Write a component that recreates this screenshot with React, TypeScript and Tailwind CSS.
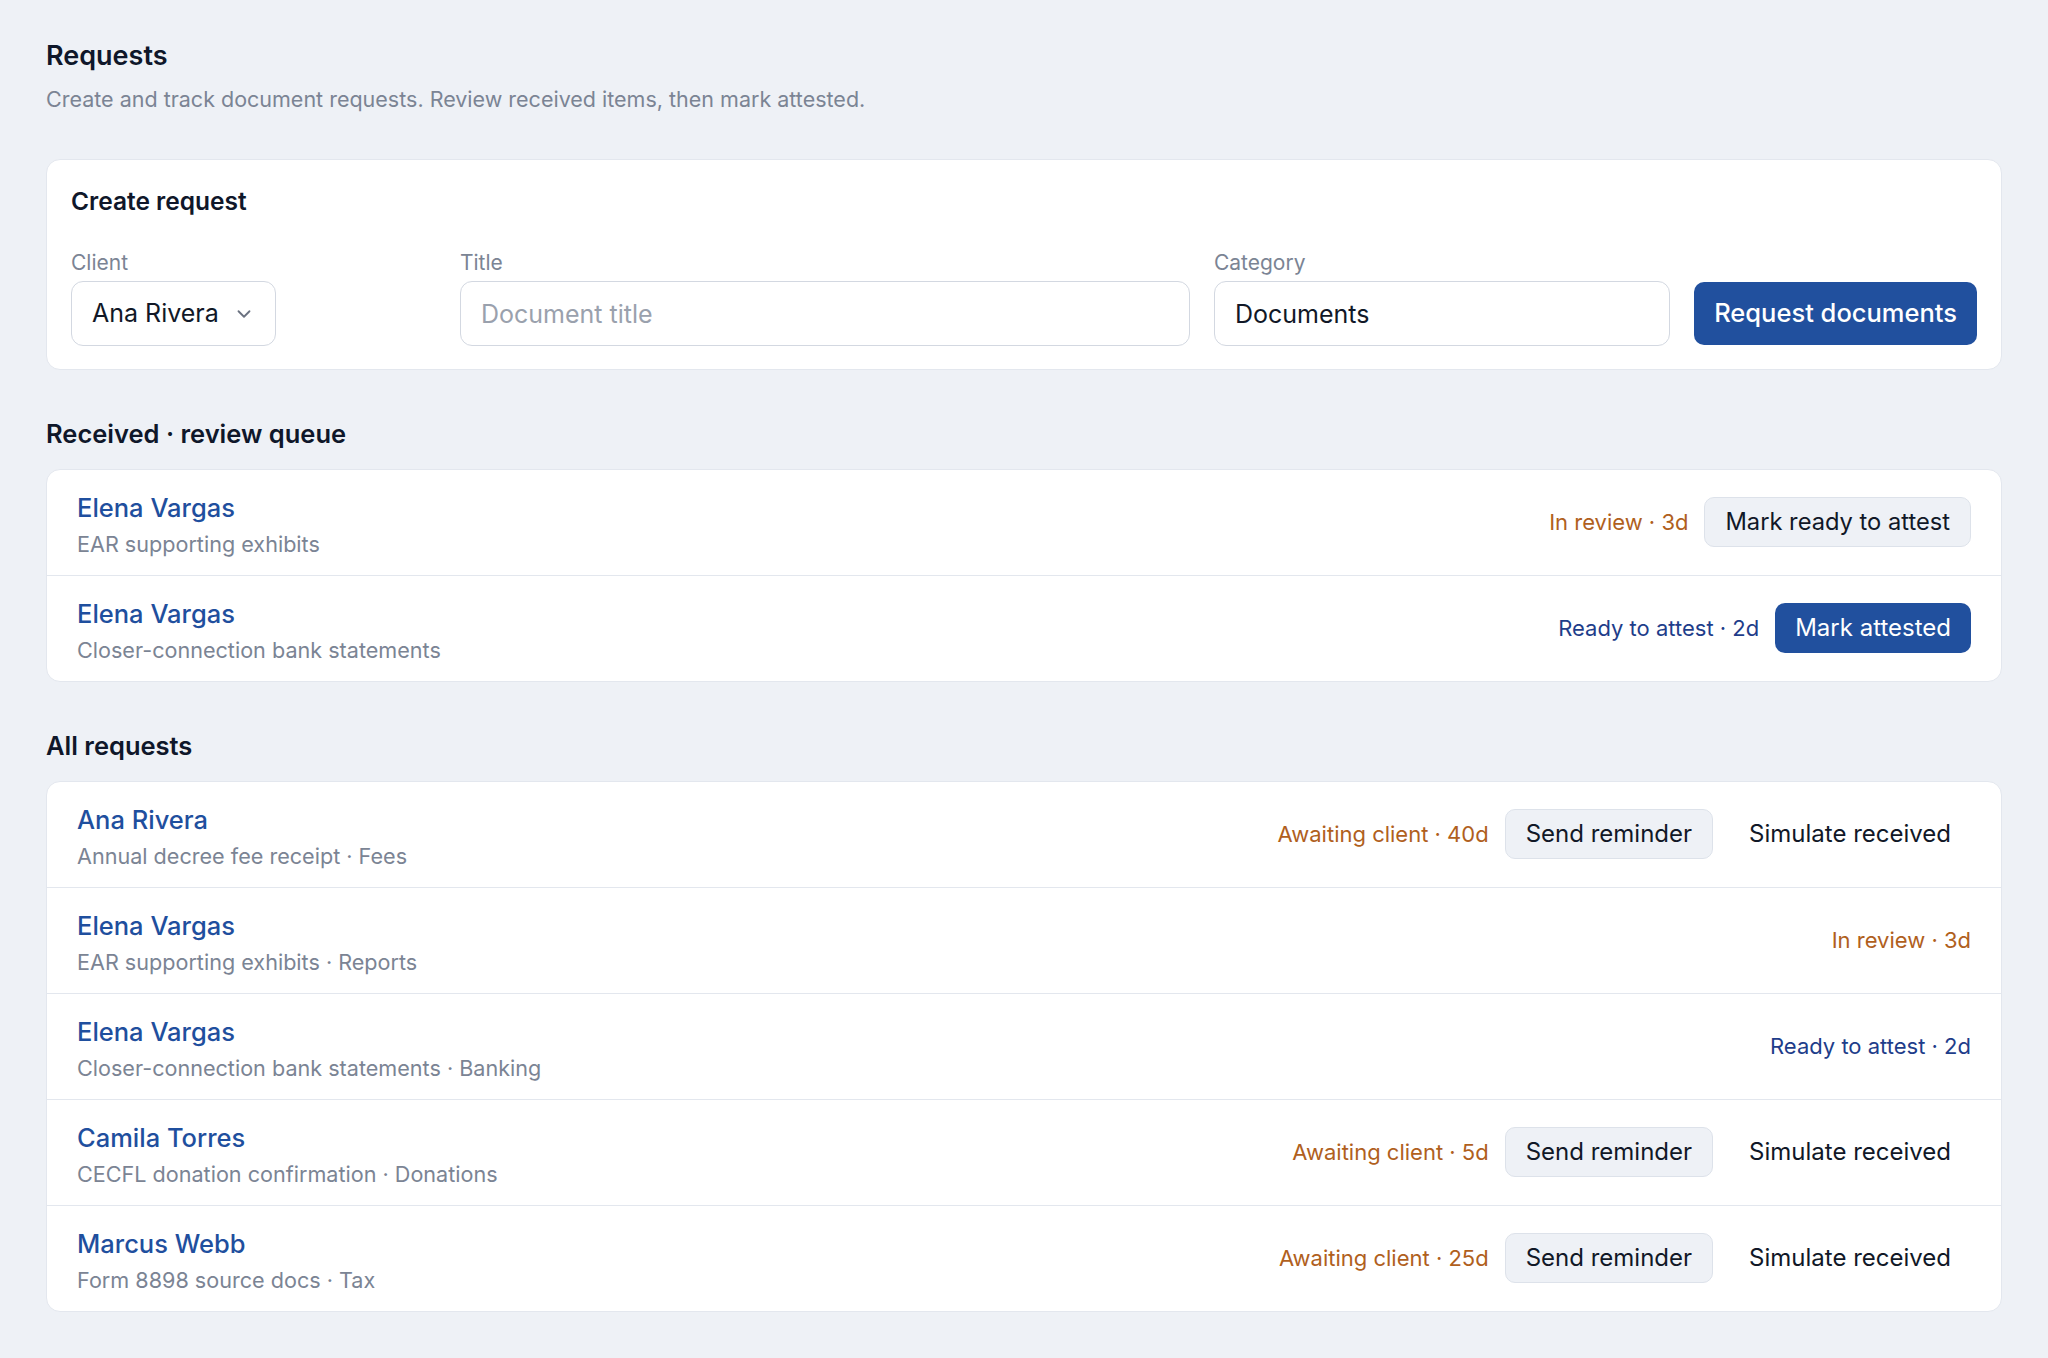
import { ChevronDown } from "lucide-react";

type Tone = "amber" | "navy";
type Action = "ready" | "attest" | "remind" | "simulate";

interface RequestRow {
  name: string;
  detail: string;
  status: string;
  tone: Tone;
  actions: Action[];
}

const reviewQueue: RequestRow[] = [
  {
    name: "Elena Vargas",
    detail: "EAR supporting exhibits",
    status: "In review · 3d",
    tone: "amber",
    actions: ["ready"],
  },
  {
    name: "Elena Vargas",
    detail: "Closer-connection bank statements",
    status: "Ready to attest · 2d",
    tone: "navy",
    actions: ["attest"],
  },
];

const allRequests: RequestRow[] = [
  {
    name: "Ana Rivera",
    detail: "Annual decree fee receipt · Fees",
    status: "Awaiting client · 40d",
    tone: "amber",
    actions: ["remind", "simulate"],
  },
  {
    name: "Elena Vargas",
    detail: "EAR supporting exhibits · Reports",
    status: "In review · 3d",
    tone: "amber",
    actions: [],
  },
  {
    name: "Elena Vargas",
    detail: "Closer-connection bank statements · Banking",
    status: "Ready to attest · 2d",
    tone: "navy",
    actions: [],
  },
  {
    name: "Camila Torres",
    detail: "CECFL donation confirmation · Donations",
    status: "Awaiting client · 5d",
    tone: "amber",
    actions: ["remind", "simulate"],
  },
  {
    name: "Marcus Webb",
    detail: "Form 8898 source docs · Tax",
    status: "Awaiting client · 25d",
    tone: "amber",
    actions: ["remind", "simulate"],
  },
];

function ActionButton({ kind }: { kind: Action }) {
  if (kind === "attest") {
    return (
      <button className="h-[50px] rounded-[10px] bg-[#21509e] px-[20px] text-[24px] leading-[30px] text-white">
        Mark attested
      </button>
    );
  }
  if (kind === "ready") {
    return (
      <button className="h-[50px] rounded-[10px] border border-[#dde2ea] bg-[#eef1f6] px-[20px] text-[23.7px] leading-[30px] text-[#111827]">
        Mark ready to attest
      </button>
    );
  }
  if (kind === "remind") {
    return (
      <button className="h-[50px] rounded-[10px] border border-[#dde2ea] bg-[#eef1f6] px-[20px] text-[24px] leading-[30px] text-[#111827]">
        Send reminder
      </button>
    );
  }
  return (
    <button className="h-[50px] rounded-[10px] px-[20px] text-[24px] leading-[30px] text-[#111827]">
      Simulate received
    </button>
  );
}

function Row({ row }: { row: RequestRow }) {
  return (
    <li className="flex items-center justify-between gap-6 px-[30px] pb-[17px] pt-[15px]">
      <div className="pt-[6px]">
        <div className="text-[25.5px] font-medium leading-[34px] text-[#1f4f9e]">{row.name}</div>
        <div className="mt-[5px] text-[21.6px] leading-[28px] text-[#7b8494]">{row.detail}</div>
      </div>
      <div className="flex items-center gap-[16px]">
        <span
          className={
            row.tone === "amber"
              ? "text-[22px] leading-[30px] text-[#b0601d]"
              : "text-[22px] leading-[30px] text-[#1e3d8a]"
          }
        >
          {row.status}
        </span>
        {row.actions.map((a) => (
          <ActionButton key={a} kind={a} />
        ))}
      </div>
    </li>
  );
}

function Section({ title, rows }: { title: string; rows: RequestRow[] }) {
  return (
    <section className="mt-[48px]">
      <h2 className="mb-[19px] text-[25.5px] font-semibold leading-[32px] text-[#0f172a]">{title}</h2>
      <ul className="divide-y divide-[#e3e7ee] overflow-hidden rounded-[14px] border border-[#e3e7ee] bg-white">
        {rows.map((r, i) => (
          <Row key={i} row={r} />
        ))}
      </ul>
    </section>
  );
}

function CreateRequest() {
  return (
    <section className="mt-[46px] rounded-[14px] border border-[#e3e7ee] bg-white px-[24px] pb-[23px] pt-[25px]">
      <h2 className="text-[24.5px] font-semibold leading-[32px] text-[#0f172a]">Create request</h2>
      <div className="mt-[32px] grid grid-cols-[1fr_2fr_1.25fr_auto] items-end gap-x-[24px]">
        <label className="flex flex-col items-start">
          <span className="mb-[4px] text-[21px] leading-[28px] text-[#7b8494]">Client</span>
          <button className="flex h-[65px] items-center gap-[14px] rounded-[12px] border border-[#d3d8e1] bg-white pl-[20px] pr-[20px] text-[25px] text-[#111827]">
            <span>Ana Rivera</span>
            <ChevronDown size={22} strokeWidth={2} className="text-[#6b7280]" />
          </button>
        </label>
        <label className="flex flex-col">
          <span className="mb-[4px] text-[21px] leading-[28px] text-[#7b8494]">Title</span>
          <input
            placeholder="Document title"
            className="h-[65px] w-full rounded-[12px] border border-[#d3d8e1] bg-white px-[20px] text-[25px] text-[#111827] outline-none placeholder:text-[#9aa1ad]"
          />
        </label>
        <label className="flex flex-col">
          <span className="mb-[4px] text-[21px] leading-[28px] text-[#7b8494]">Category</span>
          <input
            defaultValue="Documents"
            className="h-[65px] w-full rounded-[12px] border border-[#d3d8e1] bg-white px-[20px] text-[25px] text-[#111827] outline-none"
          />
        </label>
        <button className="mb-[1px] h-[63px] rounded-[10px] bg-[#21509e] px-[20px] text-[25.5px] font-medium text-white">
          Request documents
        </button>
      </div>
    </section>
  );
}

export default function App() {
  return (
    <div className="min-h-screen bg-[#eef1f6] px-[46px] pb-[46px] pt-[39px] font-[Inter,sans-serif]">
      <header>
        <h1 className="text-[27px] font-semibold leading-[34px] text-[#0f172a]">Requests</h1>
        <p className="mt-[12px] text-[21.5px] leading-[28px] text-[#7b8494]">
          Create and track document requests. Review received items, then mark attested.
        </p>
      </header>
      <CreateRequest />
      <Section title="Received · review queue" rows={reviewQueue} />
      <Section title="All requests" rows={allRequests} />
    </div>
  );
}
